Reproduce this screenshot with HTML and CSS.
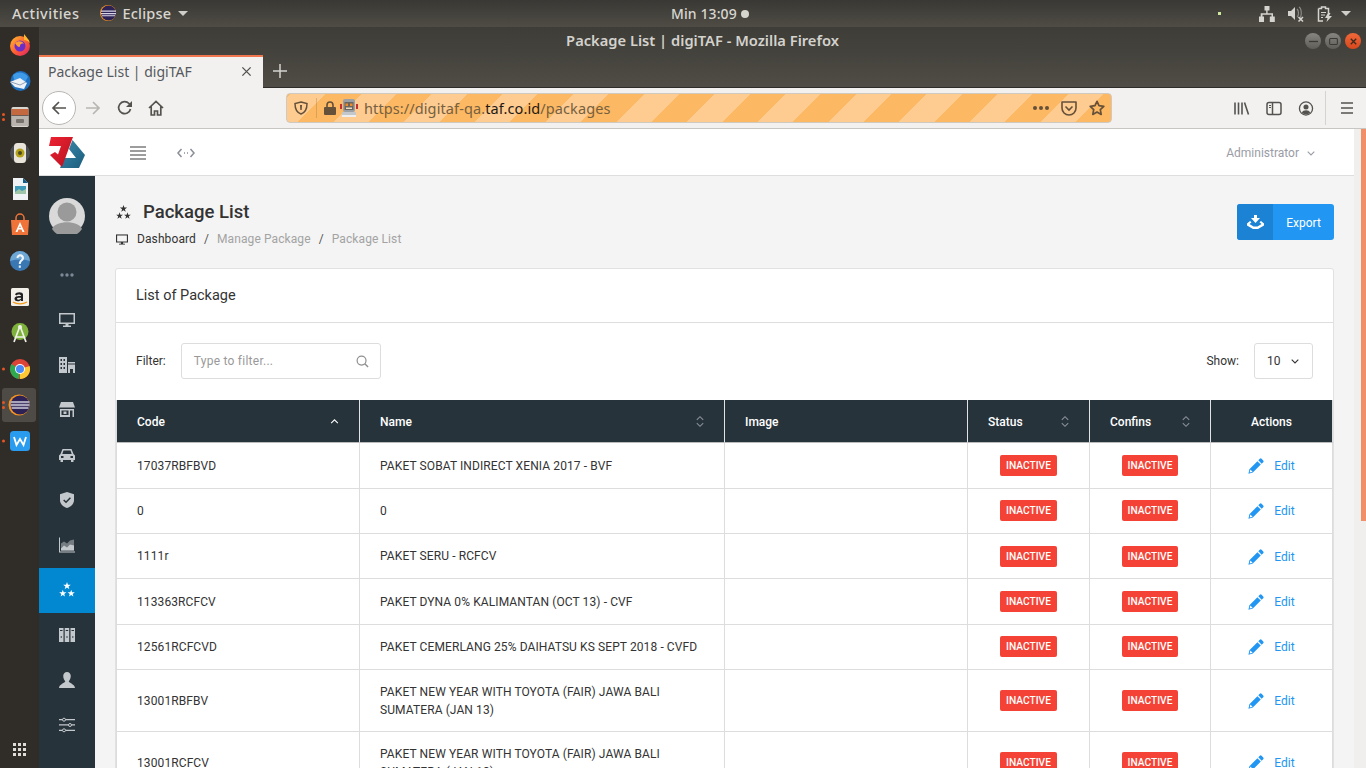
FILE: index.html
```html
<!DOCTYPE html>
<html lang="en">
<head>
<meta charset="utf-8">
<title>Package List | digiTAF</title>
<link rel="stylesheet" href="styles.css">
</head>
<body>
<svg class="sprite" width="0" height="0" aria-hidden="true">
  <defs>
    <linearGradient id="fxg" x1="0" y1="0" x2="1" y2="1"><stop offset="0" stop-color="#ffbd2e"/><stop offset=".55" stop-color="#ff5a36"/><stop offset="1" stop-color="#d81f6a"/></linearGradient>
    <linearGradient id="zr" x1="0" y1="0" x2="1" y2="1"><stop offset="0" stop-color="#ee2233"/><stop offset="1" stop-color="#b5121f"/></linearGradient>
    <linearGradient id="zb" x1="0" y1="0" x2="1" y2="1"><stop offset="0" stop-color="#3b8cae"/><stop offset="1" stop-color="#1c5c7c"/></linearGradient>
    <symbol id="i-stars" viewBox="0 0 16 16"><path d="M8 0l.94 2.700 2.860.06-2.280 1.740.83 2.740L8 5.600 5.650 7.240l.83-2.740L4.200 2.760l2.860-.06zM3.800 7.700l.89 2.570 2.720.06-2.170 1.640.79 2.600-2.230-1.550-2.230 1.550.79-2.600L.19 10.330l2.720-.06zM12.200 7.700l.89 2.570 2.720.06-2.170 1.640.79 2.600-2.230-1.550-2.230 1.550.79-2.600-2.170-1.640 2.720-.06z"/></symbol>
    <symbol id="i-monitor" viewBox="0 0 16 14"><path d="M0 0h16v11H9.500v1.500H12V14H4v-1.500h2.500V11H0zM1.500 1.500v8h13v-8z" fill-rule="evenodd"/></symbol>
    <symbol id="i-sort" viewBox="0 0 10 16"><path d="M1 6l4-4 4 4M1 10l4 4 4-4" fill="none" stroke="currentColor" stroke-width="1.300"/></symbol>
    <symbol id="i-pen" viewBox="0 0 16 16"><path d="M11.800.8a1.300 1.300 0 0 1 1.800 0l1.600 1.600a1.300 1.300 0 0 1 0 1.800l-1.500 1.500-3.400-3.400zM9.400 3.200l3.400 3.400-8 8L.4 15.700l1-4.500zM2.400 11.500l-.7 2.900 2.900-.7z" fill-rule="evenodd"/></symbol>
  </defs>
</svg>

<div class="desktop">
  <header class="topbar">
    <div class="top-left">
      <span class="top-label top-wide">Activities</span>
      <span class="top-app">
        <svg class="ico-16" viewBox="0 0 16 16"><circle cx="8" cy="8" r="8" fill="#f7941e"/><circle cx="8.500" cy="8" r="7.500" fill="#2c2255"/><path d="M1 5.500h15v1.300H1zM1 8h15v1.300H1zM2 10.300h13v1H2z" fill="#d8d6e6"/></svg>
        <span class="top-label top-wide">Eclipse</span>
        <span class="caret"></span>
      </span>
    </div>
    <div class="top-clock"><span class="top-label">Min 13:09</span><span class="clock-dot"></span></div>
    <div class="top-tray">
      <span class="tray-pip"></span>
      <svg class="tray-ico" viewBox="0 0 16 16" fill="#d6d4cf"><path d="M5.500 0h5v4.500H8.600v2.700H14v3.300h1.800V16h-5v-5.500h1.700V8.700h-9v1.800H5V16H0v-5.500h1.700V7.200h5.500V4.500H5.500z"/></svg>
      <svg class="tray-ico" viewBox="0 0 16 16" fill="#d6d4cf"><path d="M0 5h3l4-4v13l-4-4H0z"/><path d="M9 3c2 1.500 2 7 0 8M11 1c3 2 3 10 0 12" fill="none" stroke="#8d8b85" stroke-width="1.200"/><path d="M10.500 11l4.500 4.500m0-4.500l-4.500 4.500" stroke="#d6d4cf" stroke-width="1.500"/></svg>
      <svg class="tray-ico" viewBox="0 0 16 16"><path d="M1.500 2.500h3V1h4v1.500h3v5M6 15H1.500V2.500" fill="none" stroke="#d6d4cf" stroke-width="1.500"/><path d="M4 6.500h5M4 9h4M4 11.500h2" stroke="#d6d4cf" stroke-width="1.200"/><path d="M11 7l-3 5h2.500L9.500 16l5.500-6h-3l1.500-3z" fill="#d6d4cf"/></svg>
      <span class="caret tray-caret"></span>
    </div>
  </header>

  <div class="workspace">
    <nav class="dock">
      <div class="dock-item">
        <svg class="dock-ico" viewBox="0 0 24 24"><circle cx="12" cy="13" r="10" fill="url(#fxg)"/><path d="M16 1c2 3 5 5 6 9-2-2-4-3-6-3z" fill="#ffb52e"/><circle cx="12" cy="13" r="5.500" fill="#6a2fc9"/><path d="M7 10c3-3 8-2 9 1-2-1-4 0-4 2s-3 1-5-3z" fill="#ff9c33"/></svg>
      </div>
      <div class="dock-item">
        <svg class="dock-ico" viewBox="0 0 24 24"><circle cx="12.500" cy="12" r="10" fill="#1f6fc0"/><path d="M5 6c5-4 12-3 15 2l-3 5-10 2z" fill="#3f9be8"/><path d="M2 13l10-4 7 5-3 6-9-2z" fill="#eef1f6"/><path d="M3 13l9 3 6-3" fill="none" stroke="#8fa0b8"/></svg>
      </div>
      <div class="dock-item">
        <span class="pips"><i></i><i></i></span>
        <svg class="dock-ico" viewBox="0 0 24 24"><rect x="3.500" y="2" width="17" height="20" rx="1.500" fill="#d9d5cf"/><rect x="3.500" y="4" width="17" height="6" fill="#c4683f"/><rect x="3.500" y="10" width="17" height="1" fill="#6b5d53"/><rect x="3.500" y="11" width="17" height="10" fill="#b9b5ae"/><rect x="8" y="14" width="8" height="4" rx="1" fill="#77726b"/></svg>
      </div>
      <div class="dock-item">
        <svg class="dock-ico" viewBox="0 0 24 24"><circle cx="12" cy="12" r="10" fill="#4a4d52"/><rect x="6" y="2" width="12" height="20" rx="3.500" fill="#e8e4da"/><circle cx="12" cy="12" r="4.500" fill="#b5a21c"/><circle cx="12" cy="12" r="2" fill="#4a4a22"/></svg>
      </div>
      <div class="dock-item">
        <svg class="dock-ico" viewBox="0 0 24 24"><path d="M5 1h10l5 5v17H5z" fill="#f0f3f5"/><path d="M15 1l5 5h-5z" fill="#0f5d8a"/><rect x="7" y="9" width="11" height="8" fill="#3e9ab8"/><path d="M7 15l4-3 3 2 4-2v5H7z" fill="#9ec5a8"/></svg>
      </div>
      <div class="dock-item">
        <svg class="dock-ico" viewBox="0 0 24 24"><path d="M3 7h18l-1 15H4z" fill="#f0743a"/><path d="M8 7V5a4 4 0 0 1 8 0v2" fill="none" stroke="#f0743a" stroke-width="1.500"/><path d="M12 9l-4.500 10h2l1-2.500h3l1 2.500h2zM11.200 15l.8-2.200.8 2.200z" fill="#fff" fill-rule="evenodd"/></svg>
      </div>
      <div class="dock-item">
        <svg class="dock-ico" viewBox="0 0 24 24"><circle cx="12" cy="12" r="10" fill="#3a78b4"/><path d="M12 2A10 10 0 0 1 22 12 20 10 0 0 0 2 12 10 10 0 0 1 12 2z" fill="#6ea6d4"/><path d="M8.500 9c0-5 7.500-5 7.500 0 0 3-3.200 3-3.200 6h-2c0-4 3-4 3-6 0-2-3.300-2-3.300 0zM10.800 16.500h2v2.200h-2z" fill="#eef4fa"/></svg>
      </div>
      <div class="dock-item">
        <svg class="dock-ico" viewBox="0 0 24 24"><rect x="3" y="3" width="18" height="18" rx="1.500" fill="#f1efe8"/><path d="M7 9.500c1-3 8-3 8 0V16h-2v-1c-2 2-6.500 1.500-6.500-1.300 0-2.700 4-3 6.500-2.700 0-2-3.500-2-4.500-.5zM13 12.800c-2-.3-4-.1-4 1 0 1.300 3.500 1 4-.2z" fill="#222" fill-rule="evenodd"/><path d="M5 17c4 2.500 10 2.500 14 0" fill="none" stroke="#f39a1d" stroke-width="1.300"/></svg>
      </div>
      <div class="dock-item">
        <svg class="dock-ico" viewBox="0 0 24 24"><circle cx="12" cy="10.500" r="8.500" fill="#7fb23c"/><path d="M12 5L6 21M12 5l6 16M7 16h10" stroke="#f0f2ea" stroke-width="1.700" fill="none"/><circle cx="12" cy="6" r="2" fill="#f0f2ea"/></svg>
      </div>
      <div class="dock-item">
        <span class="pips"><i></i></span>
        <svg class="dock-ico" viewBox="0 0 24 24"><circle cx="12" cy="12" r="10" fill="#db4437"/><path d="M12 12l9.600-3A10 10 0 0 1 12 22z" fill="#fcc934"/><path d="M12 12l-1 10A10 10 0 0 1 3.400 7z" fill="#2da94f"/><circle cx="12" cy="12" r="5" fill="#fff"/><circle cx="12" cy="12" r="4" fill="#4a8bf5"/></svg>
      </div>
      <div class="dock-item dock-active">
        <span class="pips"><i></i><i></i></span>
        <svg class="dock-ico" viewBox="0 0 24 24"><circle cx="12" cy="12" r="10.500" fill="#f7941e"/><circle cx="13" cy="12" r="9.500" fill="#2c2255"/><path d="M3.500 8h19v2.300h-19zM3.500 11h19v2.300h-19zM4.500 14h17v2h-17z" fill="#a7a3bb"/></svg>
      </div>
      <div class="dock-item">
        <span class="pips"><i></i></span>
        <svg class="dock-ico" viewBox="0 0 24 24"><rect x="2" y="2" width="20" height="20" rx="3.500" fill="#2a9cf0"/><path d="M6 8l2.500 8L12 10l3.500 6L18 8" fill="none" stroke="#fff" stroke-width="1.800"/></svg>
      </div>
      <div class="dock-spacer"></div>
      <div class="dock-grid"><i></i><i></i><i></i><i></i><i></i><i></i><i></i><i></i><i></i></div>
    </nav>

    <div class="window">
      <div class="titlebar">
        <span></span>
        <span class="win-title">Package List | digiTAF - Mozilla Firefox</span>
        <div class="win-btns">
          <span class="win-btn"><svg viewBox="0 0 10 10"><path d="M0 5h10" stroke="#3b3a36" stroke-width="1.500"/></svg></span>
          <span class="win-btn"><svg viewBox="0 0 10 10"><rect x=".7" y="1.700" width="8.600" height="6.600" rx="1" fill="none" stroke="#3b3a36" stroke-width="1.200"/></svg></span>
          <span class="win-btn win-close"><svg viewBox="0 0 10 10"><path d="M2 2l6 6M8 2l-6 6" stroke="#3b2a20" stroke-width="1.500"/></svg></span>
        </div>
      </div>

      <div class="tabstrip">
        <div class="tab">
          <span class="tab-text">Package List | digiTAF</span>
          <svg class="tab-x" viewBox="0 0 12 12"><path d="M1.500 1.500l9 9M10.500 1.500l-9 9" stroke="#55534f" stroke-width="1.500"/></svg>
        </div>
        <svg class="new-tab" viewBox="0 0 14 14"><path d="M7 0v14M0 7h14" stroke="#d6d4cf" stroke-width="1.500"/></svg>
      </div>

      <div class="navbar">
        <span class="back-btn"><svg viewBox="0 0 16 16"><path d="M15 8H2M8 2L2 8l6 6" fill="none" stroke="#55534f" stroke-width="1.700"/></svg></span>
        <svg class="nav-ico nav-fwd" viewBox="0 0 16 16"><path d="M1 8h13M8 2l6 6-6 6" fill="none" stroke="#b8b6b2" stroke-width="1.700"/></svg>
        <svg class="nav-ico nav-reload" viewBox="0 0 16 16"><path d="M13.500 9A6 6 0 1 1 12 3.500L14 5.500" fill="none" stroke="#55534f" stroke-width="1.700"/><path d="M15 1v6H9z" fill="#55534f"/></svg>
        <svg class="nav-ico nav-home" viewBox="0 0 16 16"><path d="M1 8l7-6.500L15 8M3.200 6.500V15H6.500v-4h3v4h3.300V6.500" fill="none" stroke="#55534f" stroke-width="1.700"/></svg>
        <div class="urlbar">
          <svg class="url-shield" viewBox="0 0 14 14"><path d="M7 1l6 1.500c0 5-1.500 9-6 10.500C2.500 11.500 1 7.500 1 2.500z" fill="none" stroke="#65503a" stroke-width="1.500"/><path d="M6 4h2l-.3 5h-1.400z" fill="#65503a"/></svg>
          <span class="url-sep"></span>
          <svg class="url-lock" viewBox="0 0 12 14"><path d="M3 6V4a3 3 0 0 1 6 0v2" fill="none" stroke="#65503a" stroke-width="1.600"/><rect y="6" width="12" height="8" rx="1" fill="#65503a"/></svg>
          <svg class="url-robot" viewBox="0 0 18 18"><rect x="3" y="0" width="12" height="13" rx="2" fill="#9aa0a5"/><rect x="4.500" y="3" width="9" height="8" fill="#6b6560"/><rect x="5.500" y="4.500" width="2.500" height="2.500" fill="#f08a22"/><rect x="10" y="4.500" width="2.500" height="2.500" fill="#f08a22"/><rect x="6" y="8.500" width="6" height="1.500" fill="#eadcc4"/><rect x="0" y="5" width="2" height="5" fill="#c9302c"/><rect x="16" y="5" width="2" height="5" fill="#c9302c"/><rect x="2" y="13" width="14" height="5" fill="#c4c8cb"/><rect x="2" y="16" width="14" height="2" fill="#eceeef"/></svg>
          <span class="url-text">https://digitaf-qa.<b>taf.co.id</b>/packages</span>
          <span class="url-fill"></span>
          <svg class="url-more" viewBox="0 0 16 4" fill="#65503a"><circle cx="2" cy="2" r="2"/><circle cx="8" cy="2" r="2"/><circle cx="14" cy="2" r="2"/></svg>
          <svg class="url-pocket" viewBox="0 0 16 15"><path d="M1 1h14v6a7 7 0 0 1-14 0z" fill="none" stroke="#65503a" stroke-width="1.600" stroke-linejoin="round"/><path d="M4.500 5.500L8 9l3.500-3.500" fill="none" stroke="#65503a" stroke-width="1.600"/></svg>
          <svg class="url-star" viewBox="0 0 16 16"><path d="M8 1.300l2 4.400 4.800.6-3.500 3.300.9 4.800L8 12l-4.200 2.400.9-4.800-3.500-3.300L6 5.700z" fill="none" stroke="#65503a" stroke-width="1.700" stroke-linejoin="round"/></svg>
        </div>
        <span class="nav-fill"></span>
        <svg class="nav-tool" viewBox="0 0 16 14"><path d="M1 1v12M4.500 1v12M8 1v12M10.500 1l4 12" stroke="#55534f" stroke-width="1.600" fill="none"/></svg>
        <svg class="nav-tool" viewBox="0 0 16 14"><rect x="1" y="1" width="14" height="12" rx="2" fill="none" stroke="#55534f" stroke-width="1.500"/><path d="M6.500 1v12" stroke="#55534f" stroke-width="1.500"/><path d="M3 4h2M3 6h2" stroke="#55534f"/></svg>
        <svg class="nav-tool" viewBox="0 0 16 16"><circle cx="8" cy="8" r="7" fill="none" stroke="#55534f" stroke-width="1.400"/><circle cx="8" cy="6.300" r="2.700" fill="#55534f"/><path d="M3.500 12.500c1-3.500 8-3.500 9 0a7 7 0 0 1-9 0z" fill="#55534f"/></svg>
        <span class="nav-div"></span>
        <svg class="nav-menu" viewBox="0 0 14 12"><path d="M1 1h12M1 6h12M1 11h12" stroke="#55534f" stroke-width="1.700"/></svg>
      </div>

      <div class="viewport">
        <div class="app">
          <div class="app-header">
            <div class="logo-cell">
              <svg class="logo" viewBox="0 0 36 32"><path d="M23.500 3L36 18l-6 13H11l4-10h12l-7-9z" fill="url(#zb)"/><path d="M2 0h22L13 30 1 18l5-3 3 2.500L12 9H0z" fill="url(#zr)"/></svg>
            </div>
            <svg class="hdr-burger" viewBox="0 0 16 14"><path d="M0 1h16M0 5h16M0 9h16M0 13h16" stroke="#7d7d7d" stroke-width="1.500"/></svg>
            <svg class="hdr-code" viewBox="0 0 18 10"><path d="M4.500 1L1 5l3.500 4M13.500 1L17 5l-3.500 4" fill="none" stroke="#8a8f96" stroke-width="1.500"/><path d="M7 5h1M10 5h1" stroke="#8a8f96" stroke-width="1.500"/></svg>
            <span class="hdr-fill"></span>
            <span class="hdr-user">Administrator</span>
            <svg class="hdr-chev" viewBox="0 0 8 5"><path d="M.7.7L4 4 7.300.7" fill="none" stroke="#9a9ca6" stroke-width="1.100"/></svg>
          </div>

          <div class="app-body">
            <aside class="sidebar">
              <div class="side-avatar">
                <svg viewBox="0 0 36 36"><circle cx="18" cy="18" r="18" fill="#d9d9d9"/><circle cx="18" cy="14" r="9.500" fill="#9a9a9a"/><path d="M3 31c3-9 27-9 30 0a18 18 0 0 1-30 0z" fill="#9a9a9a"/></svg>
              </div>
              <div class="side-item side-dots"><svg viewBox="0 0 14 4" fill="#7b8a96"><circle cx="2" cy="2" r="1.700"/><circle cx="7" cy="2" r="1.700"/><circle cx="12" cy="2" r="1.700"/></svg></div>
              <div class="side-item"><svg viewBox="0 0 16 14"><use href="#i-monitor"/></svg></div>
              <div class="side-item"><svg viewBox="0 0 16 16"><path d="M0 0h8v16H0zM1.500 2v2H3V2zM4.500 2v2H6V2zM1.500 6v2H3V6zM4.500 6v2H6V6zM1.500 10v2H3v-2zM4.500 10v2H6v-2zM9 5h7v1.500H9zM9 7.500h7V16h-2v-4h-3v4H9z" fill-rule="evenodd"/></svg></div>
              <div class="side-item"><svg viewBox="0 0 16 16"><path d="M2 0h12l2 5.500H0zM1 7h14v8H1zM2.500 8.500V13h7V8.500zM11 8.500V15h2.500V8.500zM4.500 9.500h3v2.500h-3z" fill-rule="evenodd"/></svg></div>
              <div class="side-item"><svg viewBox="0 0 16 14"><path d="M3.500 1h9L14.500 6 16 7.500V12h-1.500v2h-2.500v-2H4v2H1.500v-2H0V7.500L1.500 6zM4.500 2.500L3.300 6h9.400l-1.200-3.500zM2 8v2h2.500V8zM11.500 8v2H14V8z" fill-rule="evenodd"/></svg></div>
              <div class="side-item"><svg viewBox="0 0 14 16"><path d="M7 0l7 2.200V8c0 4-3 6.700-7 8-4-1.300-7-4-7-8V2.200z"/><path d="M3.700 8l2.300 2.300 4.400-4.600" fill="none" stroke="#27333b" stroke-width="1.500"/></svg></div>
              <div class="side-item"><svg viewBox="0 0 16 15"><path d="M0 0h1v14h15v1H0z"/><path d="M2 6l3-2 3 2 3-3 4-1v11H2z" opacity=".5"/><path d="M2 11l3-3 3 2 3-3 4 1v5H2z"/></svg></div>
              <div class="side-item side-on"><svg viewBox="0 0 16 16"><use href="#i-stars"/></svg></div>
              <div class="side-item"><svg viewBox="0 0 16 14"><path d="M0 0h4.500v14H0zM5.700 0h4.500v14H5.700zM11.500 0H16v14h-4.500zM1 2h2.500v1H1zM6.700 2h2.500v1H6.700zM12.500 2H15v1h-2.500zM1.500 9a.8.8 0 1 0 1.600 0 .8.8 0 1 0-1.600 0zM7.200 9a.8.8 0 1 0 1.600 0 .8.8 0 1 0-1.600 0zM13 9a.8.8 0 1 0 1.600 0 .8.8 0 1 0-1.600 0z" fill-rule="evenodd"/></svg></div>
              <div class="side-item"><svg viewBox="0 0 14 14"><path d="M7 0c2 0 3.300 1.500 3.300 3.500S9.500 7 8.500 8c0 1.500 5.500 2.500 5.500 6H0c0-3.500 5.500-4.500 5.500-6-1-1-1.800-2.500-1.800-4.500S5 0 7 0z"/></svg></div>
              <div class="side-item"><svg viewBox="0 0 16 14"><path d="M0 1h16v1.300H0zM0 6.300h16v1.300H0zM0 11.700h16V13H0z"/><circle cx="5" cy="1.700" r="1.500" fill="#27333b" stroke="currentColor"/><circle cx="11" cy="7" r="1.500" fill="#27333b" stroke="currentColor"/><circle cx="5" cy="12.300" r="1.500" fill="#27333b" stroke="currentColor"/></svg></div>
            </aside>

            <main class="main">
              <div class="page-head">
                <div class="page-head-text">
                  <div class="page-title">
                    <svg class="title-ico" viewBox="0 0 16 16"><use href="#i-stars"/></svg>
                    <h1>Package List</h1>
                  </div>
                  <div class="crumbs">
                    <svg class="crumb-ico" viewBox="0 0 16 14"><use href="#i-monitor"/></svg>
                    <span class="crumb-home">Dashboard</span>
                    <span class="crumb-sep">/</span>
                    <span class="crumb-off">Manage Package</span>
                    <span class="crumb-sep">/</span>
                    <span class="crumb-off">Package List</span>
                  </div>
                </div>
                <button class="export">
                  <span class="export-ico"><svg viewBox="0 0 17 14"><path d="M7 0h3v3h3L8.500 8 4 3h3z" fill="#fff"/><path d="M3 6L0 8.500v2L6 14h5l6-3.500v-2L14 6l-1.500 1.200 2 1.800-4 2.500h-4l-4-2.500 2-1.800z" fill="#fff"/></svg></span>
                  <span class="export-text">Export</span>
                </button>
              </div>

              <section class="card">
                <div class="card-title">List of Package</div>
                <div class="filters">
                  <label class="filter-label">Filter:</label>
                  <div class="filter-input">
                    <span>Type to filter...</span>
                    <svg viewBox="0 0 14 14"><circle cx="6" cy="6" r="4.800" fill="none" stroke="#8f8f8f" stroke-width="1.300"/><path d="M9.500 9.500L13 13" stroke="#8f8f8f" stroke-width="1.500"/></svg>
                  </div>
                  <span class="filter-fill"></span>
                  <label class="filter-label">Show:</label>
                  <div class="show-select">
                    <span>10</span>
                    <svg viewBox="0 0 8 5"><path d="M.7.7L4 4 7.300.7" fill="none" stroke="#333" stroke-width="1.100"/></svg>
                  </div>
                </div>
                <table class="grid">
                  <colgroup>
                    <col class="c-code"><col class="c-name"><col class="c-image"><col class="c-status"><col class="c-confins"><col class="c-actions">
                  </colgroup>
                  <thead>
                    <tr>
                      <th><div class="th-in">Code<svg class="sort-up" viewBox="0 0 10 6"><path d="M1 5l4-4 4 4" fill="none" stroke="#fff" stroke-width="1.300"/></svg></div></th>
                      <th><div class="th-in">Name<svg class="sort" viewBox="0 0 10 16"><use href="#i-sort"/></svg></div></th>
                      <th>Image</th>
                      <th><div class="th-in">Status<svg class="sort" viewBox="0 0 10 16"><use href="#i-sort"/></svg></div></th>
                      <th><div class="th-in">Confins<svg class="sort" viewBox="0 0 10 16"><use href="#i-sort"/></svg></div></th>
                      <th class="center">Actions</th>
                    </tr>
                  </thead>
                  <tbody>
                    <tr>
                      <td>17037RBFBVD</td><td>PAKET SOBAT INDIRECT XENIA 2017 - BVF</td><td></td>
                      <td class="center"><span class="badge">INACTIVE</span></td><td class="center"><span class="badge">INACTIVE</span></td>
                      <td class="center"><a class="edit"><svg viewBox="0 0 16 16"><use href="#i-pen"/></svg>Edit</a></td>
                    </tr>
                    <tr>
                      <td>0</td><td>0</td><td></td>
                      <td class="center"><span class="badge">INACTIVE</span></td><td class="center"><span class="badge">INACTIVE</span></td>
                      <td class="center"><a class="edit"><svg viewBox="0 0 16 16"><use href="#i-pen"/></svg>Edit</a></td>
                    </tr>
                    <tr>
                      <td>1111r</td><td>PAKET SERU - RCFCV</td><td></td>
                      <td class="center"><span class="badge">INACTIVE</span></td><td class="center"><span class="badge">INACTIVE</span></td>
                      <td class="center"><a class="edit"><svg viewBox="0 0 16 16"><use href="#i-pen"/></svg>Edit</a></td>
                    </tr>
                    <tr>
                      <td>113363RCFCV</td><td>PAKET DYNA 0% KALIMANTAN (OCT 13) - CVF</td><td></td>
                      <td class="center"><span class="badge">INACTIVE</span></td><td class="center"><span class="badge">INACTIVE</span></td>
                      <td class="center"><a class="edit"><svg viewBox="0 0 16 16"><use href="#i-pen"/></svg>Edit</a></td>
                    </tr>
                    <tr>
                      <td>12561RCFCVD</td><td>PAKET CEMERLANG 25% DAIHATSU KS SEPT 2018 - CVFD</td><td></td>
                      <td class="center"><span class="badge">INACTIVE</span></td><td class="center"><span class="badge">INACTIVE</span></td>
                      <td class="center"><a class="edit"><svg viewBox="0 0 16 16"><use href="#i-pen"/></svg>Edit</a></td>
                    </tr>
                    <tr>
                      <td>13001RBFBV</td><td>PAKET NEW YEAR WITH TOYOTA (FAIR) JAWA BALI SUMATERA (JAN 13)</td><td></td>
                      <td class="center"><span class="badge">INACTIVE</span></td><td class="center"><span class="badge">INACTIVE</span></td>
                      <td class="center"><a class="edit"><svg viewBox="0 0 16 16"><use href="#i-pen"/></svg>Edit</a></td>
                    </tr>
                    <tr>
                      <td>13001RCFCV</td><td>PAKET NEW YEAR WITH TOYOTA (FAIR) JAWA BALI SUMATERA (JAN 13)</td><td></td>
                      <td class="center"><span class="badge">INACTIVE</span></td><td class="center"><span class="badge">INACTIVE</span></td>
                      <td class="center"><a class="edit"><svg viewBox="0 0 16 16"><use href="#i-pen"/></svg>Edit</a></td>
                    </tr>
                  </tbody>
                </table>
              </section>
            </main>
          </div>
        </div>
        <div class="scroll-track"><div class="scroll-thumb"></div></div>
      </div>
    </div>
  </div>
</div>
</body>
</html>
```

FILE: styles.css
```css
* { box-sizing: border-box; }
html, body { margin: 0; height: 768px; overflow: hidden; }
body { font-family: Roboto, "Liberation Sans", sans-serif; font-size: 12px; color: #333; background: #302d28; }
.sprite { display: block; width: 0; height: 0; }
svg { display: block; flex: none; }
.desktop { height: 768px; display: flex; flex-direction: column; }

/* GNOME top bar */
.topbar { height: 27px; flex: none; display: grid; grid-template-columns: 671px auto 1fr; align-items: center; background: linear-gradient(#393834, #4f4c45); color: #dedcd7; }
.top-left { display: flex; align-items: center; padding: 0 0 1px 12px; }
.top-label { font-family: "Noto Sans", sans-serif; font-size: 14px; font-weight: 500; letter-spacing: .1px; color: #d8d6d1; }
.top-wide { font-size: 14.500px; letter-spacing: .5px; }
.top-app { display: flex; align-items: center; margin-left: 21px; }
.top-app .top-label { letter-spacing: .2px; }
.ico-16 { width: 16px; height: 16px; margin-right: 6px; }
.caret { width: 0; height: 0; border-left: 5px solid transparent; border-right: 5px solid transparent; border-top: 5px solid #d0cec9; margin-left: 7px; }
.top-clock { display: flex; align-items: center; }
.clock-dot { width: 8px; height: 8px; border-radius: 50%; background: #d6d4cf; margin-left: 4px; }
.top-tray { display: flex; align-items: center; justify-content: flex-end; padding-right: 15px; }
.tray-pip { width: 3px; height: 3px; background: #cfe8a0; margin-right: 38px; }
.tray-ico { width: 16px; height: 16px; margin-right: 13px; }
.tray-caret { margin-left: -5px; }

.workspace { flex: 1; min-height: 0; display: flex; }

/* Dock */
.dock { width: 39px; flex: none; display: flex; flex-direction: column; background: #302d28; }
.dock-item { height: 36px; flex: none; display: flex; align-items: center; justify-content: center; position: relative; }
.dock-ico { width: 24px; height: 24px; }
.dock-active { background: #4e4b47; border-radius: 3px; width: 34px; height: 34px; margin: 1px 0 1px 2px; }
.pips { position: absolute; left: 2px; top: 50%; transform: translateY(-50%); display: flex; flex-direction: column; gap: 2px; }
.dock-active .pips { left: 0; }
.pips i { display: block; width: 3px; height: 3px; border-radius: 50%; background: #e95420; }
.dock-spacer { flex: 1; }
.dock-grid { flex: none; display: grid; grid-template-columns: repeat(3, 3px); gap: 2px; justify-content: center; padding-bottom: 12px; margin-left: -1px; }
.dock-grid i { display: block; width: 3px; height: 3px; background: #dedcd7; }

/* Firefox window */
.window { flex: 1; min-width: 0; display: flex; flex-direction: column; }
.titlebar { height: 28px; flex: none; display: grid; grid-template-columns: 1fr auto 1fr; align-items: center; background: linear-gradient(#3e3d37, #45433d); }
.win-title { font-family: "Noto Sans", sans-serif; font-size: 14.700px; font-weight: 600; color: #d4d2cd; padding-bottom: 2px; }
.win-btns { display: flex; justify-content: flex-end; gap: 4px; padding-right: 5px; }
.win-btn { width: 16px; height: 16px; border-radius: 50%; background: linear-gradient(#87857f, #5f5d57); display: flex; align-items: center; justify-content: center; }
.win-btn svg { width: 9px; height: 9px; }
.win-close { background: linear-gradient(#f0683a, #d8481c); }

.tabstrip { height: 33px; flex: none; display: flex; align-items: stretch; background: linear-gradient(#45433d, #504d46); border-bottom: 1px solid #2e2d29; }
.tab { width: 224px; height: 33px; flex: none; display: flex; align-items: center; justify-content: space-between; padding: 0 11px 2px 9px; background: #f3f1ef; border-top: 2px solid #f0764f; }
.tab-text { font-family: "Noto Sans", sans-serif; font-size: 14px; color: #55595e; }
.tab-x { width: 11px; height: 11px; }
.new-tab { width: 14px; height: 14px; align-self: center; margin-left: 10px; }

.navbar { height: 41px; flex: none; display: flex; align-items: center; background: #f3f1ef; border-bottom: 1px solid #c8c6c3; padding-left: 3px; }
.back-btn { width: 34px; height: 34px; border-radius: 50%; background: #fff; border: 1px solid #b8b6b3; display: flex; align-items: center; justify-content: center; flex: none; }
.back-btn svg { width: 16px; height: 16px; }
.nav-ico { width: 16px; height: 16px; }
.nav-fwd { margin-left: 9px; }
.nav-reload { margin-left: 16px; }
.nav-home { margin-left: 15px; }
.urlbar { width: 826px; height: 30px; flex: none; margin-left: 122px; display: flex; align-items: center; border: 1px solid #cfc9bf; border-radius: 4px; background: repeating-linear-gradient(-45deg, #fdb863 0, #fdb863 25px, #fecb90 25px, #fecb90 50px); }
.url-shield { width: 14px; height: 14px; margin-left: 7px; }
.url-sep { width: 1px; height: 20px; background: rgba(120, 90, 50, .25); margin-left: 8px; }
.url-lock { width: 12px; height: 14px; margin-left: 7px; }
.url-robot { width: 18px; height: 18px; margin-left: 4px; }
.url-text { font-family: "Noto Sans", sans-serif; font-size: 14.500px; letter-spacing: .1px; color: #75603f; margin-left: 6px; }
.url-text b { font-weight: 400; color: #1f1a14; }
.url-fill { flex: 1; }
.url-more { width: 16px; height: 4px; }
.url-pocket { width: 16px; height: 15px; margin-left: 12px; }
.url-star { width: 16px; height: 16px; margin-left: 12px; margin-right: 6px; }
.nav-fill { flex: 1; }
.nav-tool { width: 16px; height: 15px; margin-right: 16px; }
.nav-div { width: 1px; height: 34px; background: #d5d3d0; margin-left: -5px; }
.nav-menu { width: 14px; height: 12px; margin: 0 12px 0 14px; }

/* Page viewport */
.viewport { flex: 1; min-height: 0; display: flex; background: #f4f4f4; }
.app { flex: 1; min-width: 0; display: flex; flex-direction: column; overflow: hidden; }
.scroll-track { width: 12px; flex: none; display: flex; justify-content: flex-end; background: #f0efee; }
.scroll-thumb { width: 5px; height: 392px; background: #f18f68; }

.app-header { height: 47px; flex: none; display: flex; align-items: center; padding-top: 1px; background: #fff; border-bottom: 1px solid #dedede; }
.logo-cell { width: 56px; flex: none; display: flex; justify-content: center; }
.logo { width: 36px; height: 32px; }
.hdr-burger { width: 16px; height: 14px; margin-left: 35px; }
.hdr-code { width: 18px; height: 10px; margin-left: 31px; }
.hdr-fill { flex: 1; }
.hdr-user { color: #9a9ca6; font-size: 12px; }
.hdr-chev { width: 8px; height: 5px; margin: 1px 39px 0 8px; }

.app-body { flex: 1; min-height: 0; display: flex; }
.sidebar { width: 56px; flex: none; display: flex; flex-direction: column; background: #27333b; color: #c3c8cc; }
.side-avatar { height: 77px; flex: none; display: flex; justify-content: center; padding-top: 22px; }
.side-avatar svg { width: 36px; height: 36px; }
.side-item { height: 45px; flex: none; display: flex; align-items: center; justify-content: center; padding-bottom: 1px; fill: currentColor; }
.side-item svg { width: 16px; height: 16px; }
.side-dots svg { width: 14px; height: 4px; }
.side-on { background: #0288d1; color: #fff; }

.main { flex: 1; min-width: 0; padding: 0 20px; background: #f4f4f4; }
.page-head { height: 92px; display: flex; justify-content: space-between; align-items: flex-start; padding-top: 28px; }
.page-head-text { display: flex; flex-direction: column; }
.page-title { display: flex; align-items: center; height: 16px; margin-left: 1px; }
.title-ico { width: 15px; height: 15px; fill: #333; }
h1 { margin: 0 0 0 12px; font-size: 18.500px; font-weight: 500; color: #333; line-height: 16px; }
.crumbs { display: flex; align-items: center; margin-top: 11px; margin-left: 1px; height: 16px; letter-spacing: .1px; }
.crumb-ico { width: 12px; height: 11px; fill: #333; }
.crumb-home { margin-left: 9px; color: #333; }
.crumb-sep { margin: 0 8px; color: #555; }
.crumb-off { color: #a3a3a3; }
.export { height: 36px; width: 97px; padding: 0; border: 0; border-radius: 3px; display: flex; align-items: stretch; background: #2196f3; color: #fff; font: 12px Roboto, sans-serif; overflow: hidden; }
.export-ico { width: 36px; display: flex; align-items: center; justify-content: center; background: #1c82d4; }
.export-ico svg { width: 17px; height: 14px; }
.export-text { flex: 1; display: flex; align-items: center; justify-content: center; padding-top: 1px; }

.card { background: #fff; border: 1px solid #e1e1e1; border-radius: 3px 3px 0 0; }
.card-title { height: 54px; display: flex; align-items: center; padding: 0 0 1px 20px; font-size: 14.500px; color: #333; border-bottom: 1px solid #dedede; }
.filters { display: flex; align-items: center; padding: 20px 20px 21px; }
.filter-label { color: #333; }
.filter-input { width: 200px; height: 36px; margin-left: 15px; padding: 0 11px 0 12px; display: flex; align-items: center; justify-content: space-between; border: 1px solid #ddd; border-radius: 3px; color: #999; letter-spacing: .25px; }
.filter-input svg { width: 13px; height: 13px; }
.filter-fill { flex: 1; }
.show-select { width: 59px; height: 36px; margin-left: 15px; padding: 0 13px 0 12px; display: flex; align-items: center; justify-content: space-between; border: 1px solid #ddd; border-radius: 3px; color: #333; }
.show-select svg { width: 8px; height: 5px; }

.grid { width: 1217px; table-layout: fixed; border-collapse: separate; border-spacing: 0; border-left: 1px solid #ddd; }
.c-code { width: 243px; }
.c-name { width: 365px; }
.c-image { width: 243px; }
.c-status { width: 122px; }
.c-confins { width: 121px; }
.c-actions { width: 122px; }
.grid th { height: 43.400px; padding: 1px 20px 0; text-align: left; font-weight: 500; font-size: 12px; color: #fff; background: #27333b; border-right: 1px solid #e0e3e5; border-bottom: 1px solid #bbb; }
.th-in { display: flex; align-items: center; justify-content: space-between; }
.sort { width: 8px; height: 13px; color: #8a9298; }
.sort-up { width: 9px; height: 5px; }
.grid td { height: 45.330px; padding: 12.500px 20px; line-height: 18px; font-size: 12px; letter-spacing: .1px; color: #333; border-right: 1px solid #ddd; border-bottom: 1px solid #ddd; }
.grid td.center { padding: 0 20px; text-align: center; }
.grid th.center { text-align: center; }
.grid th:last-child, .grid td:last-child { border-right: 1px solid #ddd; }
.badge { display: inline-block; height: 21px; padding: 0 6px; border-radius: 2px; background: #f44336; color: #fff; font-size: 10.200px; font-weight: 500; line-height: 21px; letter-spacing: 0; vertical-align: middle; }
.edit { display: inline-flex; align-items: center; vertical-align: middle; color: #2196f3; font-size: 12px; fill: #2196f3; }
.edit svg { width: 16px; height: 16px; margin-right: 10px; }
```
